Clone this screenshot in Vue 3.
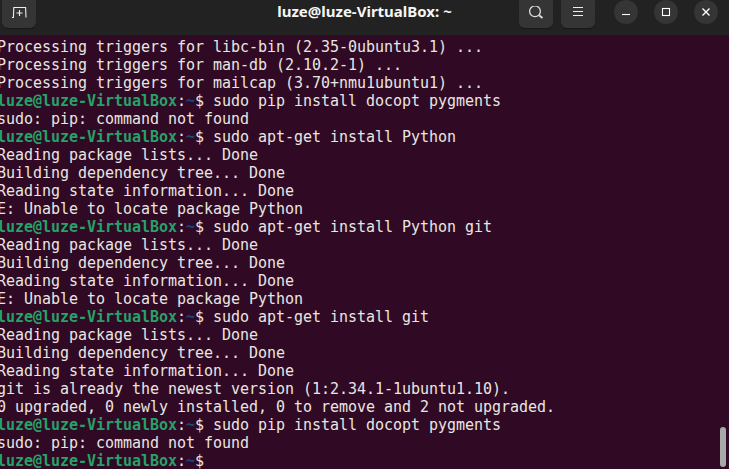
<script setup>
const host = 'luze@luze-VirtualBox'
const lines = [
  { t: 'Processing triggers for libc-bin (2.35-0ubuntu3.1) ...' },
  { t: 'Processing triggers for man-db (2.10.2-1) ...' },
  { t: 'Processing triggers for mailcap (3.70+nmu1ubuntu1) ...' },
  { c: 'sudo pip install docopt pygments' },
  { t: 'sudo: pip: command not found' },
  { c: 'sudo apt-get install Python' },
  { t: 'Reading package lists... Done' },
  { t: 'Building dependency tree... Done' },
  { t: 'Reading state information... Done' },
  { t: 'E: Unable to locate package Python' },
  { c: 'sudo apt-get install Python git' },
  { t: 'Reading package lists... Done' },
  { t: 'Building dependency tree... Done' },
  { t: 'Reading state information... Done' },
  { t: 'E: Unable to locate package Python' },
  { c: 'sudo apt-get install git' },
  { t: 'Reading package lists... Done' },
  { t: 'Building dependency tree... Done' },
  { t: 'Reading state information... Done' },
  { t: 'git is already the newest version (1:2.34.1-1ubuntu1.10).' },
  { t: '0 upgraded, 0 newly installed, 0 to remove and 2 not upgraded.' },
  { c: 'sudo pip install docopt pygments' },
  { t: 'sudo: pip: command not found' },
  { c: '' },
]
</script>

<template>
  <div class="window">
    <header class="bar">
      <div class="side">
        <button class="btn first" aria-label="New tab">
          <svg width="16" height="16" viewBox="0 0 16 16" fill="none" stroke="#eeeeee" stroke-width="1.1">
            <path d="M1 11.5 H2.4 L2.8 1.5 H14.6 L15 11.5" />
            <path d="M8.5 4 V10 M5.5 7 H11.5" />
          </svg>
        </button>
      </div>
      <div class="title">luze@luze-VirtualBox: ~</div>
      <div class="side right">
        <div class="actions">
          <button class="btn" aria-label="Search">
            <svg width="16" height="16" viewBox="0 0 16 16" fill="none" stroke="#dddddd" stroke-width="1.3">
              <circle cx="7" cy="5.3" r="5.4" />
              <path d="M11 9.3 L14.5 12" stroke-width="1.8" />
            </svg>
          </button>
          <button class="btn" aria-label="Menu">
            <svg width="16" height="16" viewBox="0 0 16 16" stroke="#eeeeee" stroke-width="1">
              <path d="M3 1.5 H13 M3 5.5 H13 M3 9.5 H13" />
            </svg>
          </button>
        </div>
        <div class="wm">
          <span class="circle">
            <svg width="12" height="12" viewBox="0 0 12 12" stroke="#ffffff" stroke-width="1.1"><path d="M2 8.5 H10" /></svg>
          </span>
          <span class="circle">
            <svg width="12" height="12" viewBox="0 0 12 12" fill="none" stroke="#ffffff" stroke-width="1.1"><rect x="2.5" y="2.5" width="7" height="7" /></svg>
          </span>
          <span class="circle">
            <svg width="12" height="12" viewBox="0 0 12 12" stroke="#ffffff" stroke-width="1.4"><path d="M2.5 2.5 L9.5 9.5 M9.5 2.5 L2.5 9.5" /></svg>
          </span>
        </div>
      </div>
    </header>
    <main class="term">
      <div v-for="(l, i) in lines" :key="i" class="line">
        <template v-if="l.t">{{ l.t }}</template>
        <template v-else><span class="host">{{ host }}</span>:<span class="path">~</span>$ {{ l.c }}</template>
      </div>
      <div class="thumb"></div>
    </main>
  </div>
</template>

<style>
html, body { margin: 0; background: #300a24; overflow: hidden; }
</style>

<style scoped>
.window {
  width: 729px;
  height: 469px;
  display: flex;
  flex-direction: column;
  overflow: hidden;
  background: #300a24;
}
.bar {
  flex: none;
  height: 35px;
  display: grid;
  grid-template-columns: 1fr auto 1fr;
  align-items: start;
  background: #222222;
  border-bottom: 1px solid #191919;
}
.side { display: flex; }
.right { justify-content: flex-end; }
.btn {
  width: 34px;
  height: 28px;
  padding: 0;
  border: 0;
  border-radius: 0 0 6px 6px;
  background: #353535;
  display: flex;
  align-items: center;
  justify-content: center;
  box-shadow: 0 1px 1px rgba(0, 0, 0, .3);
}
.first { margin-left: 2px; }
.title {
  text-align: center;
  padding: 2px 0 0 0;
  color: #f6f6f6;
  font: 700 15px/18px "Noto Sans", sans-serif;
}
.actions { display: flex; gap: 8px; margin-right: 19px; }
.wm { display: flex; gap: 16px; margin-right: 11px; }
.circle {
  width: 24px;
  height: 24px;
  border-radius: 50%;
  background: #353535;
  display: flex;
  align-items: center;
  justify-content: center;
}
.term {
  flex: 1;
  position: relative;
  margin-left: -3px;
  padding-top: 2px;
  color: #e8e6e2;
  font: 400 15px/18px "DejaVu Sans Mono", monospace;
  letter-spacing: -0.03px;
  white-space: pre;
}
.line { height: 18px; }
.host { color: #26a269; font-weight: 700; }
.path { color: #12488b; font-weight: 700; }
.thumb {
  position: absolute;
  right: 3px;
  top: 391px;
  width: 6px;
  height: 40px;
  border-radius: 3px;
  background: #a8a8a8;
}
</style>
